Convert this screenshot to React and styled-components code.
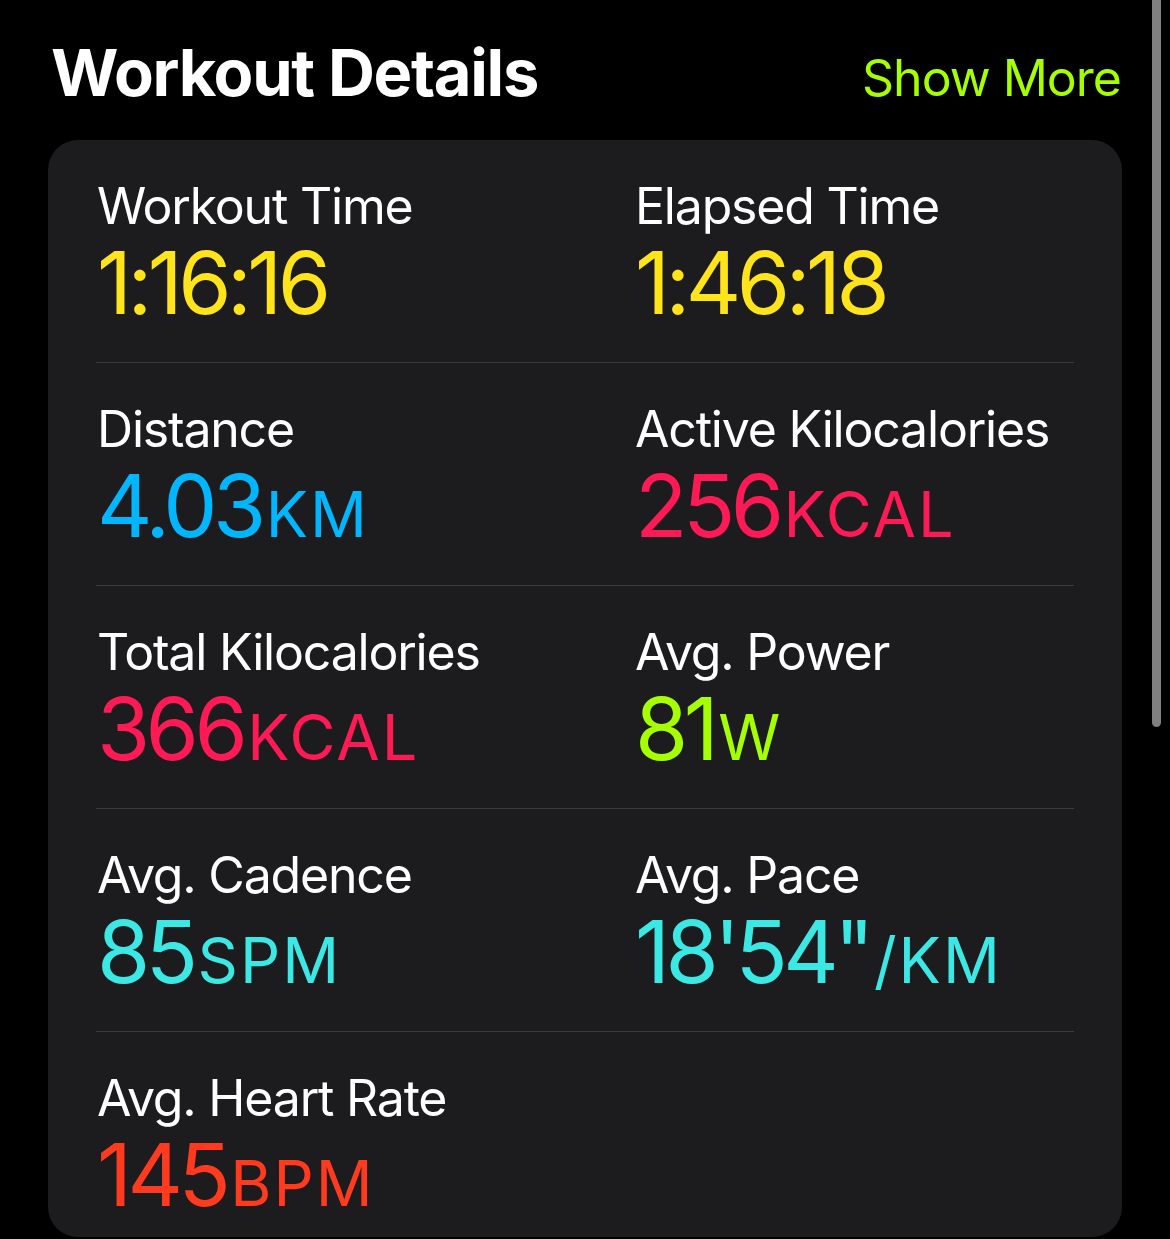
import React from "react";
import styled, { createGlobalStyle } from "styled-components";

const Global = createGlobalStyle`
  html, body { margin: 0; padding: 0; background: #000; }
  body { font-family: Inter, "Noto Sans", sans-serif; -webkit-font-smoothing: antialiased; }
`;

const Page = styled.div`
  position: relative;
  width: 1170px;
  height: 1239px;
  overflow: hidden;
  background: #000;
  padding: 33px 48px 0 48px;
  box-sizing: border-box;
`;

const Header = styled.div`
  display: flex;
  align-items: baseline;
  justify-content: space-between;
  margin-bottom: 27px;
`;

const Title = styled.h1`
  margin: 0 0 0 3px;
  font-family: Inter, sans-serif;
  font-weight: 700;
  font-size: 65px;
  line-height: 80px;
  letter-spacing: -1.3px;
  color: #fff;
`;

const Link = styled.a`
  font-family: Inter, sans-serif;
  font-weight: 400;
  font-size: 50px;
  letter-spacing: -1px;
  color: #a6ff00;
  text-decoration: none;
  margin-right: 1px;
`;

const Card = styled.section`
  background: #1c1c1e;
  border-radius: 30px;
  padding: 0 48px;
`;

const Row = styled.div`
  display: grid;
  grid-template-columns: 538px 1fr;
  padding: 35px 0 ${(p) => (p.$last ? "16px" : "33px")};
  border-bottom: ${(p) => (p.$last ? "none" : "1px solid #3a3a3c")};
`;

const Cell = styled.div`
  display: flex;
  flex-direction: column;
  padding-left: 1px;
`;

const Label = styled.div`
  font-family: Inter, sans-serif;
  font-size: 50px;
  line-height: 62px;
  font-weight: 400;
  letter-spacing: -1.2px;
  color: #fff;
  white-space: nowrap;
`;

const Value = styled.div`
  font-family: Inter, sans-serif;
  font-size: 86px;
  line-height: 92px;
  font-weight: 400;
  letter-spacing: -4.5px;
  color: ${(p) => p.$color};
  white-space: nowrap;
`;

const Unit = styled.span`
  font-size: 63px;
  line-height: 1;
  letter-spacing: 2px;
  margin-left: 4px;
`;

const ScrollThumb = styled.div`
  position: absolute;
  top: -20px;
  right: 9px;
  width: 9px;
  height: 747px;
  border-radius: 5px;
  background: #808080;
`;

const Y = "#ffe41c";
const B = "#00b6ff";
const P = "#ff1a56";
const G = "#a6ff00";
const C = "#3ce8e4";
const R = "#ff3a1e";

const rows = [
  [
    { label: "Workout Time", value: "1:16:16", color: Y },
    { label: "Elapsed Time", value: "1:46:18", color: Y },
  ],
  [
    { label: "Distance", value: "4.03", unit: "KM", color: B },
    { label: "Active Kilocalories", value: "256", unit: "KCAL", color: P },
  ],
  [
    { label: "Total Kilocalories", value: "366", unit: "KCAL", color: P },
    { label: "Avg. Power", value: "81", unit: "W", color: G },
  ],
  [
    { label: "Avg. Cadence", value: "85", unit: "SPM", color: C },
    { label: "Avg. Pace", value: "18'54\"", unit: "/KM", color: C },
  ],
  [{ label: "Avg. Heart Rate", value: "145", unit: "BPM", color: R }],
];

export default function App() {
  return (
    <>
      <Global />
      <Page>
        <Header>
          <Title>Workout Details</Title>
          <Link href="#">Show More</Link>
        </Header>
        <Card>
          {rows.map((row, i) => (
            <Row key={i} $last={i === rows.length - 1}>
              {row.map((m) => (
                <Cell key={m.label}>
                  <Label>{m.label}</Label>
                  <Value $color={m.color}>
                    {m.value}
                    {m.unit && <Unit>{m.unit}</Unit>}
                  </Value>
                </Cell>
              ))}
            </Row>
          ))}
        </Card>
        <ScrollThumb />
      </Page>
    </>
  );
}
